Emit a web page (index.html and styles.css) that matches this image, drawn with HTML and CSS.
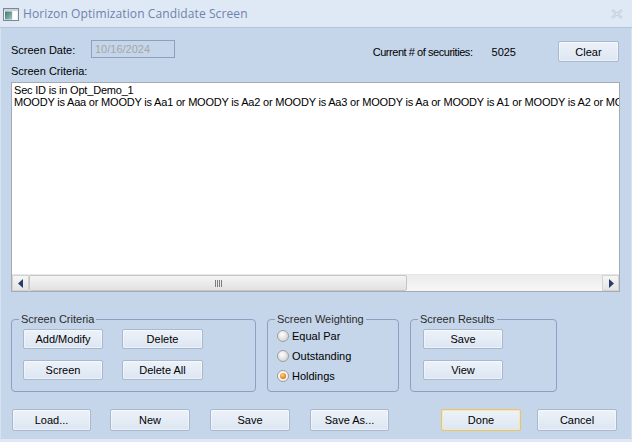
FILE: index.html
```html
<!DOCTYPE html>
<html>
<head>
<meta charset="utf-8">
<link rel="stylesheet" href="styles.css">
</head>
<body>
<div class="window">
  <div class="titlebar">
    <svg class="appicon" width="16" height="13" viewBox="0 0 16 13">
      <rect x="0.5" y="0.5" width="15" height="12" fill="#eef2f6" stroke="#7b8794"/>
      <rect x="1" y="1" width="14" height="2" fill="#c9d4de"/>
      <rect x="2" y="3.5" width="7" height="8" fill="url(#g1)"/>
      <rect x="10" y="3.5" width="4" height="8" fill="#ffffff"/>
      <defs>
        <linearGradient id="g1" x1="0" y1="0" x2="1" y2="1">
          <stop offset="0" stop-color="#3f7a5a"/>
          <stop offset="1" stop-color="#9cc3cf"/>
        </linearGradient>
      </defs>
    </svg>
    <span class="title">Horizon Optimization Candidate Screen</span>
    <svg class="close" width="12" height="10" viewBox="0 0 12 10">
      <path d="M1 1 L11 9 M11 1 L1 9" stroke="#c3ccd8" stroke-width="2.4" fill="none"/>
      <path d="M1 1 L11 9 M11 1 L1 9" stroke="#e6ecf3" stroke-width="0.8" fill="none"/>
    </svg>
  </div>
  <div class="content">
    <div class="toprow">
      <span class="date-lbl">Screen Date:</span>
      <div class="datebox">10/16/2024</div>
      <span class="count-lbl">Current # of securities:</span>
      <span class="count">5025</span>
      <button class="btn clear">Clear</button>
    </div>
    <div class="crit-lbl">Screen Criteria:</div>
    <div class="textbox">
      <div class="text">
        <div>Sec ID is in Opt_Demo_1</div>
        <div>MOODY is Aaa or MOODY is Aa1 or MOODY is Aa2 or MOODY is Aa3 or MOODY is Aa or MOODY is A1 or MOODY is A2 or MOODY is A3</div>
      </div>
      <div class="hscroll">
        <div class="sbtn">
          <svg width="6" height="9" viewBox="0 0 6 9"><path d="M5 0 L0 4.5 L5 9 Z" fill="#2a3d6b"/></svg>
        </div>
        <div class="track">
          <div class="thumb"><span class="grip"></span></div>
        </div>
        <div class="sbtn right">
          <svg width="6" height="9" viewBox="0 0 6 9"><path d="M1 0 L6 4.5 L1 9 Z" fill="#2a3d6b"/></svg>
        </div>
      </div>
    </div>
    <div class="groups">
      <div class="group g-criteria">
        <span class="legend">Screen Criteria</span>
        <div class="btngrid">
          <button class="btn">Add/Modify</button>
          <button class="btn wide">Delete</button>
          <button class="btn">Screen</button>
          <button class="btn wide">Delete All</button>
        </div>
      </div>
      <div class="group g-weight">
        <span class="legend">Screen Weighting</span>
        <div class="radios">
          <div class="radio-row"><span class="radio"></span><span>Equal Par</span></div>
          <div class="radio-row"><span class="radio"></span><span>Outstanding</span></div>
          <div class="radio-row"><span class="radio on"></span><span>Holdings</span></div>
        </div>
      </div>
      <div class="group g-results">
        <span class="legend">Screen Results</span>
        <div class="btncol">
          <button class="btn">Save</button>
          <button class="btn">View</button>
        </div>
      </div>
    </div>
    <div class="bottom">
      <button class="btn b-load">Load...</button>
      <button class="btn b-new">New</button>
      <button class="btn b-save">Save</button>
      <button class="btn b-saveas">Save As...</button>
      <button class="btn b-done">Done</button>
      <button class="btn b-cancel">Cancel</button>
    </div>
  </div>
</div>
</body>
</html>
```
FILE: styles.css
```css
html, body {
  margin: 0;
  padding: 0;
  overflow: hidden;
}
body {
  font-family: "Liberation Sans", Arial, sans-serif;
  font-size: 11px;
  color: #000;
}
.window {
  width: 632px;
  height: 442px;
  box-sizing: border-box;
  background: #c5d6ea;
  border-bottom: 3px solid #dfe8f4;
  border-left: 1px solid #d6e2f0;
  border-right: 1px solid #d6e2f0;
  display: flex;
  flex-direction: column;
}
.titlebar {
  height: 28px;
  box-sizing: border-box;
  background: #dfe9f5;
  border-bottom: 1px solid #b3c5dd;
  margin: 0 -1px;
  display: flex;
  align-items: center;
  padding-left: 3px;
}
.appicon {
  flex: none;
  margin-top: 1px;
}
.title {
  font-family: "Open Sans", "Noto Sans", sans-serif;
  font-size: 12px;
  color: #6e82ad;
  margin-left: 4px;
  flex: 1;
  letter-spacing: 0.1px;
}
.close {
  margin-right: 9px;
  margin-top: 0px;
}
.content {
  padding: 0 11px 0 10px;
  display: flex;
  flex-direction: column;
}
.toprow {
  margin-top: 12px;
  height: 22px;
  display: flex;
  align-items: flex-start;
}
.date-lbl {
  width: 80px;
  line-height: 13px;
  margin-top: 4px;
}
.datebox {
  width: 84px;
  height: 18px;
  box-sizing: border-box;
  border: 1px solid #8fa1ba;
  color: #a6a6a6;
  padding-left: 3px;
  line-height: 16px;
}
.count-lbl {
  margin-left: auto;
  margin-top: 6px;
  line-height: 13px;
  letter-spacing: -0.45px;
}
.count {
  margin-left: 19px;
  margin-right: 42px;
  margin-top: 6px;
  line-height: 13px;
}
.btn {
  font-family: "Liberation Sans", Arial, sans-serif;
  font-size: 11px;
  color: #000;
  box-sizing: border-box;
  width: 80px;
  height: 20px;
  padding: 0;
  border: 1px solid #a9b8cc;
  border-radius: 2px;
  background: linear-gradient(#edf2f9, #dce6f2);
  box-shadow: inset 0 0 0 1px rgba(255,255,255,0.45);
}
.clear {
  width: 61px;
  height: 21px;
  margin-top: 1px;
  margin-right: 1px;
}
.crit-lbl {
  margin-top: 3px;
  line-height: 13px;
}
.textbox {
  margin-top: 4px;
  height: 210px;
  box-sizing: border-box;
  border: 1px solid #a6aab2;
  background: #fff;
  display: flex;
  flex-direction: column;
}
.text {
  flex: 1;
  overflow: hidden;
  white-space: nowrap;
  padding: 1px 2px;
  line-height: 12px;
  letter-spacing: -0.2px;
}
.hscroll {
  height: 17px;
  display: flex;
  background: #f0f0f0;
  border-top: 1px solid #e6e6e6;
  box-sizing: border-box;
}
.sbtn {
  width: 17px;
  box-sizing: border-box;
  border: 1px solid #d3d3d3;
  background: linear-gradient(#f6f6f6, #e4e4e4);
  display: flex;
  align-items: center;
  justify-content: center;
}
.track {
  flex: 1;
  display: flex;
  background: linear-gradient(#ebebeb, #f7f7f7);
}
.thumb {
  width: 378px;
  box-sizing: border-box;
  border: 1px solid #c6c6c6;
  border-radius: 2px;
  background: linear-gradient(#f4f4f4, #e2e2e2);
  display: flex;
  align-items: center;
  justify-content: center;
}
.grip {
  width: 7px;
  height: 7px;
  background: repeating-linear-gradient(90deg, #7d7d7d 0 1px, transparent 1px 2px);
}
.groups {
  margin-top: 27px;
  height: 73px;
  display: flex;
  gap: 11px;
}
.group {
  position: relative;
  box-sizing: border-box;
  height: 73px;
  border: 1px solid #8ca1bf;
  border-radius: 4px;
}
.legend {
  position: absolute;
  top: -7px;
  left: 7px;
  padding: 0 2px;
  line-height: 13px;
  background: #c5d6ea;
  color: #2b2b2b;
}
.g-criteria {
  width: 245px;
  padding: 9px 0 0 11px;
}
.btngrid {
  display: grid;
  grid-template-columns: 80px 81px;
  column-gap: 19px;
  row-gap: 11px;
}
.btngrid .wide {
  width: 81px;
}
.g-weight {
  width: 132px;
  padding: 6px 0 0 9px;
}
.radio-row {
  height: 20px;
  display: flex;
  align-items: center;
  gap: 3px;
}
.radio {
  width: 12px;
  height: 12px;
  box-sizing: border-box;
  border-radius: 50%;
  border: 1px solid #9a9ea3;
  background: radial-gradient(circle at 40% 35%, #ffffff 0, #e6e6e6 45%, #c9c9c9 100%);
  display: flex;
  align-items: center;
  justify-content: center;
}
.radio.on {
  background: radial-gradient(circle at 40% 35%, #ffffff 0, #f2f2f2 60%, #d9d9d9 100%);
}
.radio.on::after {
  content: "";
  width: 6px;
  height: 6px;
  border-radius: 50%;
  background: radial-gradient(circle at 40% 35%, #fbd38a 0, #f08a22 55%, #c5500a 100%);
}
.g-results {
  width: 147px;
  padding: 9px 0 0 12px;
}
.btncol {
  display: flex;
  flex-direction: column;
  gap: 11px;
}
.bottom {
  margin-top: 17px;
  display: flex;
}
.bottom .btn {
  height: 22px;
}
.b-load { margin-left: 1px; width: 79px; }
.b-new { margin-left: 19px; }
.b-save { margin-left: 20px; }
.b-saveas { margin-left: 20px; width: 79px; }
.b-done {
  margin-left: 52px;
  border-color: #e8c46a;
  box-shadow: inset 0 0 0 1px #f7e7b8;
}
.b-cancel { margin-left: 16px; }
```
